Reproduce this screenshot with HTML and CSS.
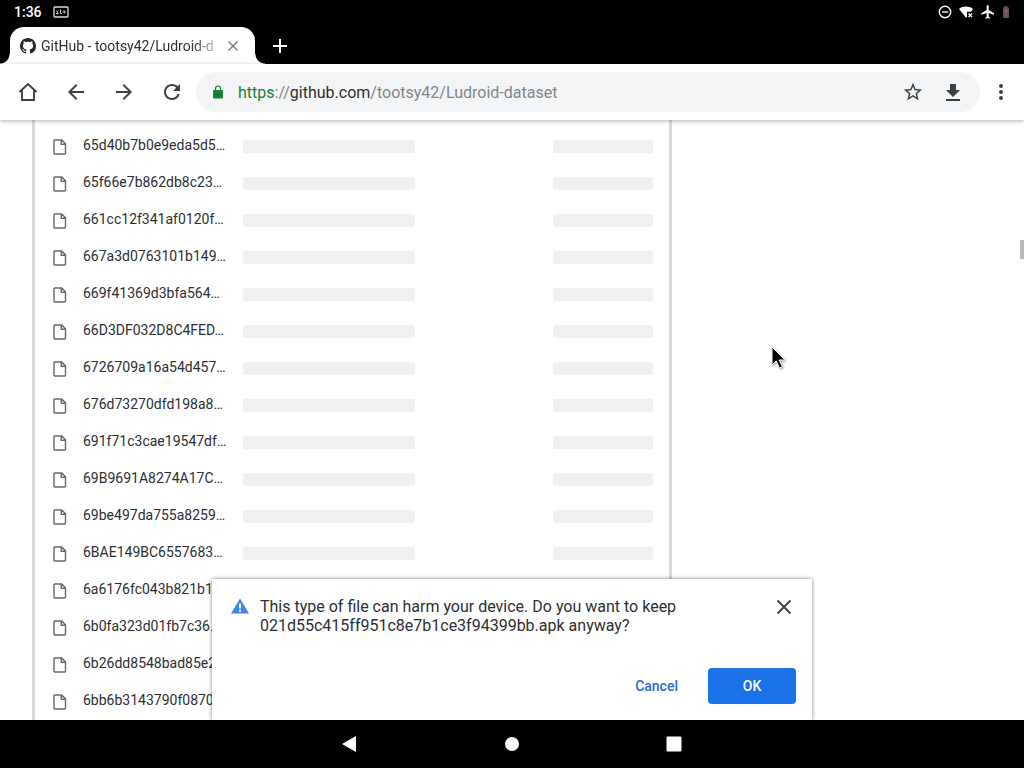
FILE: index.html
```html
<!DOCTYPE html>
<html lang="en">
<head>
  <meta charset="UTF-8">
  <meta name="viewport" content="width=device-width, initial-scale=1.0">
  <title>GitHub - tootsy42/Ludroid-dataset</title>
  <link rel="stylesheet" href="styles.css">
</head>
<body>
  <!-- Status bar -->
  <header class="status-bar">
    <span class="clock">1:36</span>
    <svg class="notif-icon" width="16" height="12" viewBox="0 0 16 12" fill="none" stroke="#ddd">
      <rect x="1" y="1" width="14" height="10" rx="1" stroke-width="1.3"/>
      <path d="M3.200 4.500L5.500 7.500H3.200M5.500 4.500L4.500 5.500M7.500 3.500V7.500h1.700M9.800 6h3M11.300 4.500v3" stroke-width="0.900"/>
    </svg>
    <div class="status-icons">
      <svg width="14" height="14" viewBox="0 0 14 14" fill="none" stroke="#fff" stroke-width="1.400">
        <circle cx="7" cy="7" r="5.700"/>
        <path d="M4 7h6"/>
      </svg>
      <svg width="16" height="14" viewBox="0 0 16 14">
        <path d="M1 4C5 .8 11 .8 15 4l-2 2.700H9v5L8 12.800z" fill="#fff"/>
        <path d="M10.500 8.500l3.500 3.500M14 8.500L10.500 12" stroke="#fff" stroke-width="1.400"/>
      </svg>
      <svg width="16" height="16" viewBox="0 0 24 24" fill="#fff">
        <path d="M21 16v-2l-8-5V3.500c0-.83-.67-1.500-1.500-1.500S10 2.670 10 3.500V9l-8 5v2l8-2.500V19l-2 1.500V22l3.500-1 3.500 1v-1.500L13 19v-5.500l8 2.500z"/>
      </svg>
      <svg width="8" height="14" viewBox="0 0 8 14">
        <path d="M2.500 1h3v1.500H7V13H1V2.500h1.500z" fill="#6b4a4a"/>
        <path d="M4 4.500v4M4 9.800v1.400" stroke="#b08c8c"/>
      </svg>
    </div>
  </header>

  <!-- Tabs -->
  <div class="tab-strip">
    <div class="tab">
      <svg width="16" height="16" viewBox="0 0 16 16" fill="#24292e">
        <path d="M8 0C3.580 0 0 3.580 0 8c0 3.540 2.290 6.530 5.470 7.590.4.070.55-.17.55-.38 0-.19-.01-.82-.01-1.490-2.010.37-2.530-.49-2.690-.94-.09-.23-.48-.94-.82-1.130-.28-.15-.68-.52-.01-.53.63-.01 1.080.58 1.230.82.72 1.210 1.870.87 2.330.66.07-.52.28-.87.51-1.070-1.780-.2-3.640-.89-3.640-3.950 0-.87.31-1.590.82-2.150-.08-.2-.36-1.020.08-2.120 0 0 .67-.21 2.200.82.64-.18 1.320-.27 2-.27s1.360.09 2 .27c1.530-1.040 2.200-.82 2.200-.82.44 1.100.16 1.920.08 2.120.51.56.82 1.270.82 2.150 0 3.070-1.870 3.750-3.650 3.950.29.25.54.73.54 1.480 0 1.070-.01 1.930-.01 2.200 0 .21.15.46.55.38A8.010 8.010 0 0 0 16 8c0-4.420-3.580-8-8-8z"/>
      </svg>
      <span class="tab-title">GitHub - tootsy42/Ludroid-d</span>
      <button class="tab-close" aria-label="Close tab">
        <svg width="12" height="12" viewBox="0 0 12 12" stroke="#777" stroke-width="1.400"><path d="M1.500 1.500l9 9M10.500 1.500l-9 9"/></svg>
      </button>
    </div>
    <button class="new-tab" aria-label="New tab">
      <svg width="14" height="14" viewBox="0 0 14 14" stroke="#fff" stroke-width="2"><path d="M7 0v14M0 7h14"/></svg>
    </button>
  </div>

  <!-- Toolbar -->
  <nav class="toolbar">
    <button class="icon-button" aria-label="Home">
      <svg width="24" height="24" viewBox="0 0 24 24" fill="none" stroke="#3c4043" stroke-width="1.900"><path d="M3.500 12L12 4l8.500 8M6 10.500V20h12v-9.500"/></svg>
    </button>
    <button class="icon-button" aria-label="Back">
      <svg width="24" height="24" viewBox="0 0 24 24" fill="#3c4043"><path d="M20 11H7.830l5.590-5.590L12 4l-8 8 8 8 1.410-1.410L7.830 13H20v-2z"/></svg>
    </button>
    <button class="icon-button" aria-label="Forward">
      <svg width="24" height="24" viewBox="0 0 24 24" fill="#3c4043"><path d="M12 4l-1.410 1.410L16.170 11H4v2h12.170l-5.580 5.590L12 20l8-8z"/></svg>
    </button>
    <button class="icon-button" aria-label="Reload">
      <svg width="24" height="24" viewBox="0 0 24 24" fill="#3c4043"><path d="M17.650 6.350C16.200 4.900 14.210 4 12 4c-4.420 0-7.990 3.580-7.990 8s3.570 8 7.990 8c3.730 0 6.840-2.550 7.730-6h-2.080c-.82 2.330-3.040 4-5.650 4-3.310 0-6-2.690-6-6s2.690-6 6-6c1.660 0 3.140.69 4.220 1.780L13 11h7V4l-2.350 2.350z"/></svg>
    </button>
    <div class="url-bar">
      <svg class="lock" width="12" height="14" viewBox="0 0 12 14">
        <rect x="1" y="5" width="10" height="8.500" rx="1" fill="#188038"/>
        <path d="M3.500 5.500V3.500a2.500 2.500 0 0 1 5 0v2" fill="none" stroke="#188038" stroke-width="1.200"/>
        <circle cx="6" cy="9.200" r="1" fill="#0d652d"/>
      </svg>
      <div class="url" role="textbox" aria-label="Address" tabindex="0"><span class="scheme">https</span>://<span class="host">github.com</span>/tootsy42/Ludroid-dataset</div>
      <button class="bar-button" aria-label="Bookmark">
        <svg width="22" height="22" viewBox="0 0 24 24" fill="#3c4043"><path d="M22 9.240l-7.190-.62L12 2 9.190 8.630 2 9.240l5.460 4.730L5.820 21 12 17.270 18.180 21l-1.630-7.030L22 9.240zM12 15.400l-3.760 2.270 1-4.280-3.320-2.880 4.380-.38L12 6.100l1.710 4.040 4.380.38-3.320 2.880 1 4.280L12 15.400z"/></svg>
      </button>
      <button class="bar-button" aria-label="Download">
        <svg width="24" height="24" viewBox="0 0 24 24" fill="#3c4043"><path d="M19 10h-4V4H9v6H5l7 7zM5 19v2h14v-2z"/></svg>
      </button>
    </div>
    <button class="menu-button" aria-label="Menu">
      <svg width="24" height="24" viewBox="0 0 24 24" fill="#3c4043"><circle cx="12" cy="6" r="2"/><circle cx="12" cy="12" r="2"/><circle cx="12" cy="18" r="2"/></svg>
    </button>
  </nav>

  <main>
    <svg class="sprite">
      <symbol id="file" viewBox="0 0 14 16">
        <path d="M1.700 1h7L12.500 4.800V14.300q0 .7-.7.700H1.700q-.7 0-.7-.7V1.700q0-.7.7-.7zM8.300 1v4.200h4.200" fill="none" stroke="#636970" stroke-width="1.400"/>
      </symbol>
    </svg>

    <!-- File list -->
    <div class="file-box">
      <table class="files">
        <tbody id="files"></tbody>
      </table>
    </div>

    <div class="scroll-thumb"></div>

    <svg class="cursor" width="16" height="24" viewBox="0 0 16 24">
      <path d="M2 1v18l4.200-4 3.200 7 3-1.400-3.200-6.600H15z" fill="#000" stroke="#fff"/>
    </svg>

    <!-- Download warning -->
    <section class="infobar" role="dialog" aria-labelledby="message">
      <div class="infobar-top">
        <svg class="warning" width="20" height="18" viewBox="0 0 20 18">
          <path d="M10 1.500L19 16.500H1z" fill="#4285e8"/>
          <path d="M10 6.500v5M10 12.800v2" stroke="#fff" stroke-width="2"/>
        </svg>
        <p id="message">This type of file can harm your device. Do you want to keep 021d55c415ff951c8e7b1ce3f94399bb.apk anyway?</p>
        <button class="infobar-close" aria-label="Close">
          <svg width="16" height="16" viewBox="0 0 16 16" stroke="#3c4043" stroke-width="1.900"><path d="M1.500 1.500l13 13M14.500 1.500l-13 13"/></svg>
        </button>
      </div>
      <div class="actions">
        <button class="cancel">Cancel</button>
        <button class="ok">OK</button>
      </div>
    </section>
  </main>

  <!-- Navigation bar -->
  <footer class="nav-bar">
    <button aria-label="System back"><svg width="16" height="16" viewBox="0 0 16 16" fill="#fff"><path d="M0 8L14 0v16z"/></svg></button>
    <button aria-label="System home"><svg width="16" height="16" viewBox="0 0 16 16" fill="#fff"><circle cx="8" cy="8" r="7"/></svg></button>
    <button aria-label="Recent apps"><svg width="16" height="16" viewBox="0 0 16 16" fill="#fff"><rect width="15" height="15" x=".5" y=".5" rx="1"/></svg></button>
  </footer>

  <script src="script.js"></script>
</body>
</html>
```

FILE: styles.css
```css
* {
  box-sizing: border-box;
}

body {
  font-family: Roboto, sans-serif;
  margin: 0;
  height: 100vh;
  display: flex;
  flex-direction: column;
  overflow: hidden;
  background-color: #fff;
  color: #2c2f33;
}

button {
  display: flex;
  align-items: center;
  justify-content: center;
  border: none;
  padding: 0;
  background: none;
  font-family: inherit;
  cursor: pointer;
}

svg {
  flex-shrink: 0;
}

/* Status bar */
.status-bar {
  display: flex;
  align-items: center;
  height: 24px;
  padding: 0 14px;
  background-color: #000;
  color: #fff;
}

.clock {
  font-size: 14px;
  font-weight: 500;
}

.notif-icon {
  margin-left: 11px;
}

.status-icons {
  display: flex;
  align-items: center;
  gap: 6px;
  margin-left: auto;
}

/* Tabs */
.tab-strip {
  display: flex;
  align-items: flex-end;
  height: 40px;
  padding-left: 10px;
  background-color: #000;
}

.tab {
  position: relative;
  display: flex;
  align-items: center;
  width: 245px;
  height: 37px;
  padding: 0 16px 0 10px;
  border-radius: 14px 14px 0 0;
  background-color: #fff;
}

.tab::before,
.tab::after {
  content: "";
  position: absolute;
  bottom: 0;
  width: 10px;
  height: 10px;
}

.tab::before {
  left: -10px;
  background: radial-gradient(circle at 0 0, #000 9px, #fff 10px);
}

.tab::after {
  right: -10px;
  background: radial-gradient(circle at 100% 0, #000 9px, #fff 10px);
}

.tab-title {
  flex: 1;
  margin: 0 10px 0 5px;
  font-size: 14px;
  white-space: nowrap;
  overflow: hidden;
  mask-image: linear-gradient(to right, #000 86%, transparent 104%);
}

.new-tab {
  width: 50px;
  height: 37px;
}

/* Toolbar */
.toolbar {
  position: relative;
  z-index: 1;
  display: flex;
  align-items: center;
  height: 56px;
  padding-left: 4px;
  background-color: #fff;
  box-shadow: 0 1px 4px rgba(0, 0, 0, 0.3);
}

.icon-button {
  width: 48px;
  height: 48px;
}

.url-bar {
  flex: 1;
  display: flex;
  align-items: center;
  height: 40px;
  padding: 0 7px 0 16px;
  border-radius: 20px;
  background-color: #f3f5f6;
}

.url {
  flex: 1;
  margin-left: 14px;
  font-size: 16px;
  color: #80868b;
}

.scheme {
  color: #188038;
}

.host {
  color: #2c2f33;
}

.bar-button {
  width: 40px;
  height: 40px;
}

.menu-button {
  width: 46px;
  height: 48px;
  margin-left: -2px;
}

/* Page */
main {
  position: relative;
  flex: 1;
  min-height: 0;
  overflow: hidden;
}

.sprite {
  position: absolute;
  width: 0;
  height: 0;
}

.file-box {
  max-width: 640px;
  height: 100%;
  margin-left: 32px;
  padding: 6px 16px 0;
  border: solid #d5dadb;
  border-width: 0 3px;
}

.files {
  width: 100%;
  table-layout: fixed;
  border-collapse: collapse;
}

.files td {
  height: 37px;
  padding: 0;
  font-size: 14px;
  white-space: nowrap;
}

.files svg {
  display: block;
  margin: 4px 0 0 2px;
}

.col-icon {
  width: 32px;
}

.col-name {
  width: 160px;
}

.col-date {
  width: 100px;
}

.skeleton {
  height: 13px;
  margin-top: 4px;
  border-radius: 3px;
  background-color: #f1f1f1;
}

.col-message .skeleton {
  width: 172px;
}

.scroll-thumb {
  position: absolute;
  top: 120px;
  right: 0;
  width: 4px;
  height: 19px;
  background-color: #b8b8b8;
}

.cursor {
  position: absolute;
  top: 226px;
  left: 770px;
  filter: drop-shadow(1px 1px 1px rgba(0, 0, 0, 0.4));
}

/* Download warning */
.infobar {
  position: absolute;
  bottom: 0;
  left: 50%;
  width: 600px;
  margin-left: -300px;
  padding: 18px 16px 16px 18px;
  background-color: #fff;
  box-shadow: 0 0 4px rgba(0, 0, 0, 0.5);
}

.infobar-top {
  display: flex;
  align-items: flex-start;
}

.infobar p {
  flex: 1;
  margin: 0 80px 0 10px;
  font-size: 16px;
  line-height: 19px;
}

.infobar-close {
  width: 24px;
  height: 20px;
}

.actions {
  display: flex;
  justify-content: flex-end;
  gap: 14px;
  margin-top: 33px;
}

.actions button {
  height: 36px;
  font-size: 14px;
  font-weight: 500;
}

.cancel {
  padding: 0 16px;
  color: #2a6cc8;
}

.actions .ok {
  width: 88px;
  border-radius: 4px;
  background-color: #1a73e8;
  color: #fff;
}

/* Navigation bar */
.nav-bar {
  display: flex;
  align-items: center;
  justify-content: center;
  gap: 114px;
  height: 48px;
  background-color: #000;
}

.nav-bar button {
  width: 48px;
  height: 48px;
}
```

FILE: script.js
```javascript
const files = [
  '65d40b7b0e9eda5d5…',
  '65f66e7b862db8c23…',
  '661cc12f341af0120f…',
  '667a3d0763101b149…',
  '669f41369d3bfa564…',
  '66D3DF032D8C4FED…',
  '6726709a16a54d457…',
  '676d73270dfd198a8…',
  '691f71c3cae19547df…',
  '69B9691A8274A17C…',
  '69be497da755a8259…',
  '6BAE149BC6557683…',
  '6a6176fc043b821b1…',
  '6b0fa323d01fb7c36…',
  '6b26dd8548bad85e2…',
  '6bb6b3143790f0870…'
];

function renderFiles() {
  const body = document.getElementById('files');

  files.forEach(name => {
    const row = document.createElement('tr');
    row.innerHTML = `
      <td class="col-icon"><svg width="14" height="16"><use href="#file"/></svg></td>
      <td class="col-name">${name}</td>
      <td class="col-message"><div class="skeleton"></div></td>
      <td class="col-date"><div class="skeleton"></div></td>
    `;
    body.appendChild(row);
  });
}

renderFiles();
```
